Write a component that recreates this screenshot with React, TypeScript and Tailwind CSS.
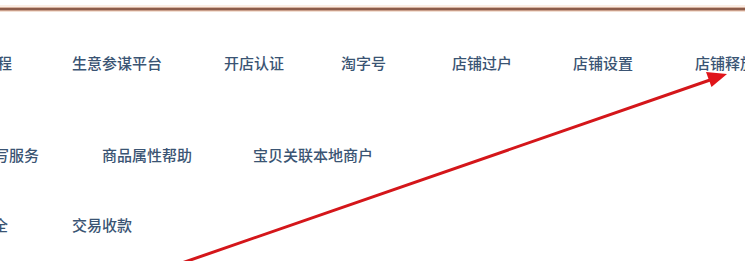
const rows = [
  {
    top: "mt-[41px]",
    shift: "-ml-[3px]",
    items: [
      { label: "程", w: "w-[75px]" },
      { label: "生意参谋平台", w: "w-[152px]" },
      { label: "开店认证", w: "w-[117px]" },
      { label: "淘字号", w: "w-[111px]" },
      { label: "店铺过户", w: "w-[121px]" },
      { label: "店铺设置", w: "w-[122px]" },
      { label: "店铺释放", w: "w-[80px]" },
    ],
  },
  {
    top: "mt-[72px]",
    shift: "-ml-[6px]",
    items: [
      { label: "写服务", w: "w-[108px]" },
      { label: "商品属性帮助", w: "w-[151px]" },
      { label: "宝贝关联本地商户", w: "w-[140px]" },
    ],
  },
  {
    top: "mt-[50px]",
    shift: "-ml-[7px]",
    items: [
      { label: "全", w: "w-[79px]" },
      { label: "交易收款", w: "w-[80px]" },
    ],
  },
];

function Arrow() {
  return (
    <svg
      className="absolute inset-0 pointer-events-none"
      width="745"
      height="261"
      viewBox="0 0 745 261"
    >
      <line
        x1="176"
        y1="265"
        x2="710"
        y2="80"
        stroke="#d4161a"
        strokeWidth="3"
        strokeLinecap="round"
      />
      <polygon points="727,74 711.5,87 706,72" fill="#e0151a" />
    </svg>
  );
}

export default function App() {
  return (
    <div className="relative w-[745px] h-[261px] overflow-hidden bg-white font-['Noto_Sans_CJK_SC','Noto_Sans',sans-serif]">
      {/* top rule */}
      <div className="pt-[5px]">
        <div className="h-[2px] bg-[#fbeee5]" />
        <div className="h-[1px] bg-[#d7b3a0]" />
        <div className="h-[2px] bg-[#8c5c4a]" />
        <div className="h-[1px] bg-[#c99e8a]" />
        <div className="h-[1px] bg-[#f3e0d4]" />
      </div>

      {/* link rows */}
      {rows.map((row, i) => (
        <div key={i} className={`flex ${row.top} ${row.shift}`}>
          {row.items.map((item) => (
            <span
              key={item.label}
              className={`${item.w} shrink-0 whitespace-nowrap text-[15px] leading-[20px] font-medium text-[#3a5473]`}
            >
              {item.label}
            </span>
          ))}
        </div>
      ))}

      <Arrow />
    </div>
  );
}
